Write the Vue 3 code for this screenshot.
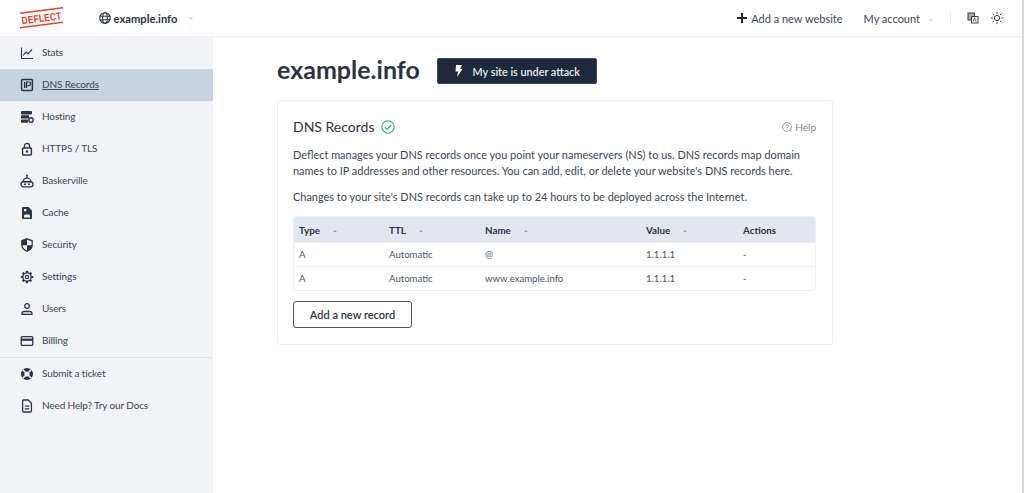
<script setup>
const top = [
  { label: 'Stats', icon: 'stats' },
  { label: 'DNS Records', icon: 'ip', active: true },
  { label: 'Hosting', icon: 'hosting' },
  { label: 'HTTPS / TLS', icon: 'lock' },
  { label: 'Baskerville', icon: 'robot' },
  { label: 'Cache', icon: 'cache' },
  { label: 'Security', icon: 'shield' },
  { label: 'Settings', icon: 'gear' },
  { label: 'Users', icon: 'user' },
  { label: 'Billing', icon: 'card' },
]
const bottom = [
  { label: 'Submit a ticket', icon: 'help' },
  { label: 'Need Help? Try our Docs', icon: 'doc' },
]
const records = [
  { type: 'A', ttl: 'Automatic', name: '@', value: '1.1.1.1', actions: '-' },
  { type: 'A', ttl: 'Automatic', name: 'www.example.info', value: '1.1.1.1', actions: '-' },
]
const gearTeeth = [0, 45, 90, 135, 180, 225, 270, 315]
</script>

<template>
  <div class="page">
    <header class="topbar">
      <div class="brand">
        <svg class="logo" width="50" height="24" viewBox="0 0 50 24">
          <path d="M0 6.500 L43 1 L43 2.500 L0 8 Z" fill="#e8412f" />
          <path d="M0 21 L43 15.500 L43 17 L0 22.500 Z" fill="#e8412f" />
          <text x="21.500" y="15.800" text-anchor="middle" textLength="40" lengthAdjust="spacingAndGlyphs" transform="rotate(-7 21.500 12)" class="logo-text">DEFLECT</text>
        </svg>
      </div>
      <div class="site">
        <svg class="globe" width="12" height="12" viewBox="0 0 12 12" fill="none" stroke="#2b3442" stroke-width="1.100">
          <circle cx="6" cy="6" r="5.300" />
          <ellipse cx="6" cy="6" rx="2.400" ry="5.300" />
          <path d="M.8 4.200h10.400M.8 7.800h10.400" />
        </svg>
        <span>example.info</span>
        <i class="caret"></i>
      </div>
      <div class="top-right">
        <span class="add-site">
          <svg class="plus" width="10" height="10" viewBox="0 0 10 10"><path d="M4 0h2v4h4v2H6v4H4V6H0V4h4z" fill="#1d2530" /></svg>
          Add a new website
        </span>
        <span class="account">My account<i class="caret"></i></span>
        <span class="divider"></span>
        <svg width="12" height="12" viewBox="0 0 12 12" fill="none" stroke="#3a4452">
          <rect x="1" y="1" width="6.500" height="7" fill="#aab0b9" />
          <rect x="4.500" y="4.500" width="6.500" height="6.500" fill="#fff" />
          <path d="M6.200 9.500l1.500-3.400 1.500 3.400" stroke-width=".8" />
        </svg>
        <svg class="sun" width="14" height="14" viewBox="0 0 14 14" fill="none" stroke="#3a4452" stroke-width="1">
          <circle cx="7" cy="7" r="2.600" />
          <path d="M7 .8v2M7 11.200v2M.8 7h2M11.200 7h2M2.600 2.600l1.400 1.400M10 10l1.400 1.400M2.600 11.400L4 10M10 4l1.400-1.400" />
        </svg>
      </div>
    </header>

    <div class="body">
      <aside class="sidebar">
        <nav class="nav-group">
          <a v-for="item in top" :key="item.label" class="nav-item" :class="{ active: item.active }">
            <svg class="nav-icon" width="14" height="14" viewBox="0 0 14 14">
              <g v-if="item.icon === 'stats'" fill="none" stroke="#2b3442" stroke-width="1.100">
                <path d="M1.500 1.500v11h11.500" />
                <path d="M3 9.500l3-3.400 2 1.800 4-4.600" />
              </g>
              <g v-else-if="item.icon === 'ip'">
                <rect x="1.600" y="1.600" width="10.800" height="10.800" rx="1" fill="none" stroke="#2b3442" stroke-width="1.500" />
                <rect x="4" y="4" width="1.400" height="6" fill="#2b3442" />
                <path d="M6.600 10V4h2.200a1.600 1.600 0 0 1 0 3.600H7.600" fill="none" stroke="#2b3442" stroke-width="1.200" />
              </g>
              <g v-else-if="item.icon === 'hosting'" fill="#2b3442">
                <rect x="1" y="1" width="11" height="3.400" rx=".8" />
                <rect x="1" y="5.200" width="8" height="3.400" rx=".8" />
                <rect x="1" y="9.400" width="7" height="3.400" rx=".8" />
                <circle cx="11" cy="10" r="2.200" fill="none" stroke="#2b3442" stroke-width="1.400" />
              </g>
              <g v-else-if="item.icon === 'lock'">
                <path d="M4.400 6V4a2.600 2.600 0 0 1 5.200 0v2" fill="none" stroke="#2b3442" stroke-width="1.300" />
                <rect x="2.600" y="6" width="8.800" height="7" rx="1" fill="none" stroke="#2b3442" stroke-width="1.400" />
                <circle cx="7" cy="9.500" r="1.200" fill="#2b3442" />
              </g>
              <g v-else-if="item.icon === 'robot'">
                <circle cx="7" cy="1.600" r="1" fill="#2b3442" />
                <path d="M7 2v3" stroke="#2b3442" />
                <path d="M3 8a4 4 0 0 1 8 0z" fill="none" stroke="#2b3442" stroke-width="1.200" />
                <rect x="1" y="7.600" width="12" height="5.200" rx="2.600" fill="none" stroke="#2b3442" stroke-width="1.300" />
                <circle cx="5" cy="10.200" r="1" fill="#2b3442" />
                <circle cx="9" cy="10.200" r="1" fill="#2b3442" />
              </g>
              <g v-else-if="item.icon === 'cache'">
                <path d="M2 2a1 1 0 0 1 1-1h5.500L12 4.500V12a1 1 0 0 1-1 1H3a1 1 0 0 1-1-1z" fill="#2b3442" />
                <path d="M4 11.400V10a1.400 1.400 0 0 1 1.400-1.400h3.200A1.400 1.400 0 0 1 10 10v1.400z" fill="#f2f3f7" />
                <rect x="4" y="3" width="2.400" height="2.200" fill="#f2f3f7" />
              </g>
              <g v-else-if="item.icon === 'shield'">
                <path d="M7 .8l5.200 2v3.600c0 3.200-2.200 5.600-5.200 6.800-3-1.200-5.200-3.600-5.200-6.800V2.800z" fill="none" stroke="#2b3442" stroke-width="1.300" />
                <path d="M7 .8v6.400H1.800V2.800zM7 7.200h5.200c0 2.800-2.200 4.900-5.200 6z" fill="#2b3442" />
              </g>
              <g v-else-if="item.icon === 'gear'" fill="none" stroke="#2b3442">
                <circle cx="7" cy="7" r="4.200" stroke-width="1.300" />
                <circle cx="7" cy="7" r="1.700" stroke-width="1.200" />
                <rect v-for="a in gearTeeth" :key="a" x="5.900" y=".8" width="2.200" height="2" rx=".5" fill="#2b3442" stroke="none" :transform="`rotate(${a} 7 7)`" />
              </g>
              <g v-else-if="item.icon === 'user'" fill="none" stroke="#2b3442" stroke-width="1.300">
                <circle cx="7" cy="4" r="2.300" />
                <path d="M2 12.300v-.9c0-1.200 1-1.900 2.200-1.900h5.600c1.200 0 2.200.7 2.200 1.900v.9z" />
              </g>
              <g v-else-if="item.icon === 'card'">
                <rect x="1.200" y="2.600" width="11.600" height="8.800" rx="1.200" fill="none" stroke="#2b3442" stroke-width="1.300" />
                <rect x="1.200" y="4.600" width="11.600" height="2.200" fill="#2b3442" />
              </g>
            </svg>
            <span class="nav-label">{{ item.label }}</span>
          </a>
        </nav>
        <nav class="nav-group second">
          <a v-for="item in bottom" :key="item.label" class="nav-item">
            <svg class="nav-icon" width="14" height="14" viewBox="0 0 14 14">
              <g v-if="item.icon === 'help'">
                <circle cx="7" cy="7" r="6" fill="#2b3442" />
                <circle cx="7" cy="7" r="2.600" fill="#f2f3f7" />
                <path d="M2.800 2.800l2.400 2.400M11.200 2.800L8.800 5.200M2.800 11.200l2.400-2.400M11.200 11.200L8.800 8.800" stroke="#f2f3f7" stroke-width="1.500" />
              </g>
              <g v-else fill="none" stroke="#2b3442" stroke-width="1.300">
                <path d="M2.600 2a1 1 0 0 1 1-1H8.200L11.400 4.200V12a1 1 0 0 1-1 1H3.600a1 1 0 0 1-1-1z" />
                <path d="M4.800 7.200h4.400M4.800 9.800h4.400" />
              </g>
            </svg>
            <span class="nav-label">{{ item.label }}</span>
          </a>
        </nav>
      </aside>

      <main class="main">
        <div class="heading">
          <h1>example.info</h1>
          <button class="attack">
            <svg width="9" height="12" viewBox="0 0 9 12"><path d="M2 0h6L6.200 4H8.500L3 12 4.200 6.500H1.500z" fill="#fff" /></svg>
            My site is under attack
          </button>
        </div>

        <section class="card">
          <div class="card-head">
            <h2>DNS Records</h2>
            <svg width="14" height="14" viewBox="0 0 14 14" fill="none" stroke="#3aa873" stroke-width="1.100">
              <circle cx="7" cy="7" r="6.200" />
              <path d="M3.900 7.200l2.200 2.200 4.200-4.600" stroke-width="1.300" />
            </svg>
            <span class="help">
              <svg width="10" height="10" viewBox="0 0 10 10" fill="none" stroke="#7d8794" stroke-width=".8">
                <circle cx="5" cy="5" r="4.400" />
                <path d="M3.600 3.900A1.400 1.400 0 1 1 5 5.500v.6M5 7v.7" />
              </svg>
              Help
            </span>
          </div>
          <p class="text first">Deflect manages your DNS records once you point your nameservers (NS) to us. DNS records map domain names to IP addresses and other resources. You can add, edit, or delete your website's DNS records here.</p>
          <p class="text second-p">Changes to your site's DNS records can take up to 24 hours to be deployed across the Internet.</p>

          <div class="table">
            <div class="row head">
              <span>Type<i class="sort"></i></span>
              <span>TTL<i class="sort"></i></span>
              <span>Name<i class="sort"></i></span>
              <span>Value<i class="sort"></i></span>
              <span>Actions</span>
            </div>
            <div v-for="(r, i) in records" :key="i" class="row">
              <span>{{ r.type }}</span>
              <span>{{ r.ttl }}</span>
              <span>{{ r.name }}</span>
              <span>{{ r.value }}</span>
              <span>{{ r.actions }}</span>
            </div>
          </div>

          <button class="add-record">Add a new record</button>
        </section>
      </main>
    </div>
  </div>
</template>

<style>
html, body { margin: 0; background: #fff; }
</style>

<style scoped>
.page {
  height: 493px;
  overflow: hidden;
  font-family: Lato, "Open Sans", sans-serif;
  color: #2b3442;
  background: #fff;
  border-right: 2px solid #d9dadd;
  box-sizing: border-box;
}
.topbar {
  height: 37px;
  box-sizing: border-box;
  border-bottom: 1px solid #f0f1f3;
  display: flex;
  align-items: center;
}
.brand { width: 99px; padding-left: 20px; box-sizing: border-box; display: flex; }
.logo-text { font: 800 10.500px "Liberation Sans", sans-serif; fill: #e8412f; }
.site { display: flex; align-items: center; gap: 2.500px; font-size: 11.200px; font-weight: 700; }
.caret {
  display: inline-block;
  width: 0; height: 0;
  border-left: 3px solid transparent;
  border-right: 3px solid transparent;
  border-top: 3px solid #dbe0e6;
  margin-left: 8px;
  vertical-align: 1px;
}
.top-right { margin-left: auto; display: flex; align-items: center; font-size: 11px; color: #3c4654; padding-right: 18px; }
.add-site { display: flex; align-items: center; }
.plus { margin-right: 4px; }
.account { margin-left: 21px; }
.divider { width: 1px; height: 12px; background: #e8eaee; margin: 0 16px; }
.sun { margin-left: 11px; }
.body { display: flex; height: 456px; }
.sidebar { width: 213px; background: #f2f3f6; flex: none; }
.nav-group.second { border-top: 1px solid #dfe3ea; }
.nav-item {
  height: 32px;
  display: flex;
  align-items: center;
  padding-left: 20px;
  gap: 8px;
  font-size: 10px;
  letter-spacing: -.12px;
  color: #3c4654;
}
.nav-item.active { background: #c8d3df; }
.nav-item.active .nav-label { text-decoration: underline; }
.nav-label { margin-top: -2px; }
.nav-icon { flex: none; margin-top: -1px; }
.main { flex: 1; padding: 18px 0 0 64px; min-width: 0; }
.heading { display: flex; align-items: center; gap: 17px; height: 28px; }
h1 { margin: 0; font-size: 25px; font-weight: 700; color: #2b3442; line-height: 28px; }
.attack {
  width: 160px; height: 26px;
  margin-top: 4px;
  background: #1e2a3b;
  color: #e9ecf0;
  border: 1px solid #3a4454;
  border-radius: 2px;
  font: 600 10.800px Lato, sans-serif;
  display: flex; align-items: center; justify-content: center; gap: 10px;
}
.card {
  width: 556px;
  height: 245px;
  box-sizing: border-box;
  margin-top: 17px;
  border: 1px solid #eceef1;
  border-radius: 3px;
  padding: 17px 16px 0 15px;
}
.card-head { display: flex; align-items: center; gap: 7px; height: 18px; }
h2 { margin: -2px 0 0; font-size: 14px; font-weight: 400; color: #2b3442; }
.help { margin-left: auto; display: flex; align-items: center; gap: 3px; font-size: 10px; color: #7d8794; }
.text { margin: 0; font-size: 10.950px; line-height: 16px; color: #3c4654; }
.text.first { margin-top: 11px; }
.text.second-p { margin-top: 10px; }
.table {
  margin-top: 11px;
  border: 1px solid #edeff2;
  border-radius: 3px;
  overflow: hidden;
}
.row {
  display: grid;
  grid-template-columns: 90px 96px 161px 97px 1fr;
  height: 24px;
  align-items: center;
  padding-left: 5px;
  font-size: 9.600px;
  color: #4a5462;
  border-top: 1px solid #eef0f3;
  box-sizing: border-box;
}
.row.head { height: 25px; background: #e1e7ef; border-top: 0; font-weight: 700; color: #2b3442; font-size: 9.800px; }
.sort {
  display: inline-block;
  width: 0; height: 0;
  border-left: 2px solid transparent;
  border-right: 2px solid transparent;
  border-bottom: 2px solid #9aa4b1;
  margin-left: 13px;
  vertical-align: 2px;
}
.add-record {
  margin-top: 10px;
  width: 119px; height: 27px;
  background: #fff;
  border: 1px solid #4a5462;
  border-radius: 3px;
  font: 600 11px Lato, sans-serif;
  color: #2b3442;
  display: block;
}
</style>
